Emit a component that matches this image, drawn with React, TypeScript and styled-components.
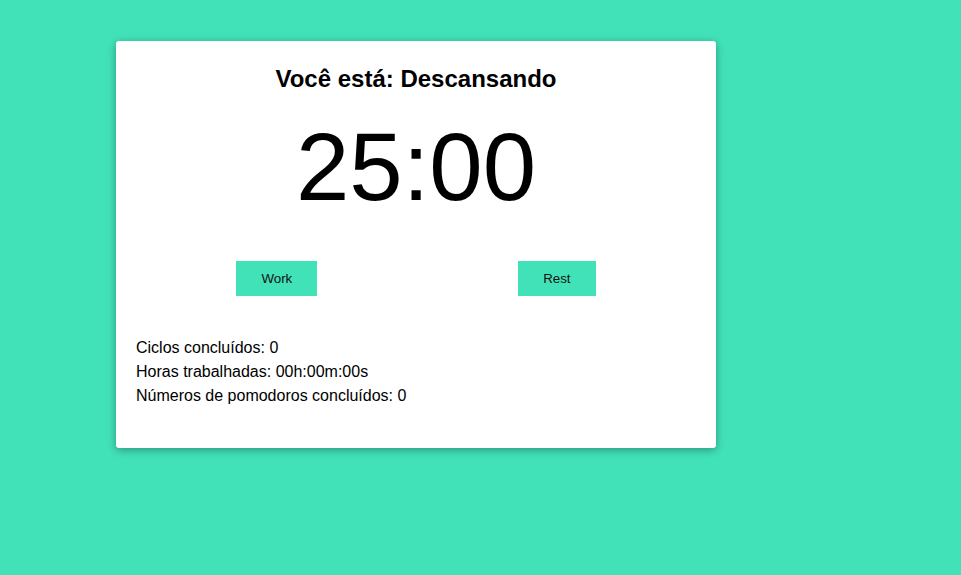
import styled, { createGlobalStyle } from "styled-components"

const GlobalStyle = createGlobalStyle`
	html, body {
		margin: 0;
		padding: 0;
		background: #42e2b8;
		font-family: "Liberation Sans", Arial, sans-serif;
	}
`

const Page = styled.div`
	min-height: 575px;
	padding: 41px 0 0 116px;
	box-sizing: border-box;
`

const Card = styled.div`
	width: 600px;
	box-sizing: border-box;
	padding: 20px 20px 40px;
	background: #fff;
	border-radius: 3px;
	box-shadow: 0 2px 8px rgba(0, 0, 0, 0.35);
`

const Title = styled.h2`
	margin: 4px 0 0;
	font-size: 24px;
	font-weight: bold;
	text-align: center;
	color: #000;
`

const Timer = styled.div`
	margin-top: 19px;
	font-size: 96px;
	text-align: center;
	color: #000;
`

const Controls = styled.div`
	display: flex;
	justify-content: space-around;
	margin-top: 39px;
`

const Button = styled.button`
	height: 35px;
	padding: 0 25px;
	border: none;
	background: #42e2b8;
	color: #111;
	font-family: "Liberation Sans", Arial, sans-serif;
	font-size: 13.33px;
	cursor: pointer;
`

const Stats = styled.div`
	margin-top: 40px;
	font-size: 16px;
	line-height: 24px;
	color: #000;
`

const StatLine = styled.p`
	margin: 0;
`

const App = () => {
	return (
		<>
			<GlobalStyle />
			<Page>
				<Card>
					<Title>Você está: Descansando</Title>
					<Timer>25:00</Timer>
					<Controls>
						<Button>Work</Button>
						<Button>Rest</Button>
					</Controls>
					<Stats>
						<StatLine>Ciclos concluídos: 0</StatLine>
						<StatLine>Horas trabalhadas: 00h:00m:00s</StatLine>
						<StatLine>Números de pomodoros concluídos: 0</StatLine>
					</Stats>
				</Card>
			</Page>
		</>
	)
}

export default App
